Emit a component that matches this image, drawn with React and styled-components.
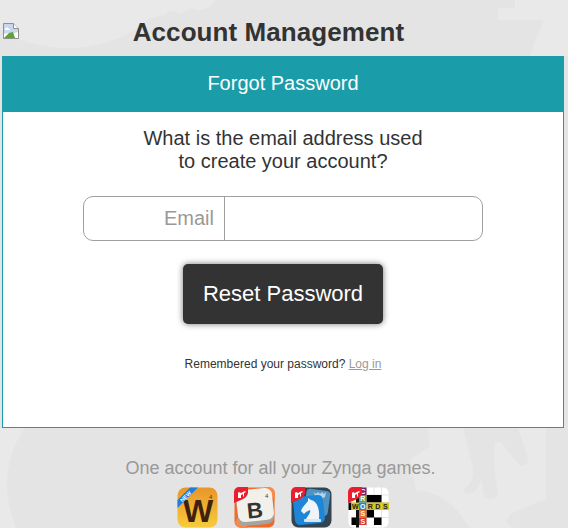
import React from "react";
import styled, { createGlobalStyle } from "styled-components";

const Global = createGlobalStyle`
  html, body { margin: 0; padding: 0; background: #e4e4e4; }
  body { font-family: "Liberation Sans", Arial, sans-serif; color: #333; }
  * { box-sizing: border-box; }
`;

const Page = styled.div`
  position: relative;
  width: 568px;
  height: 528px;
  overflow: hidden;
  padding: 0 4px 0 2px;
`;
const Backdrop = styled.svg`
  position: absolute;
  inset: 0;
  width: 568px;
  height: 528px;
`;
const Content = styled.div`
  position: relative;
  display: flex;
  flex-direction: column;
`;
const Masthead = styled.header`
  height: 56px;
  display: flex;
  align-items: flex-start;
  padding: 23px 0 0 1px;
`;
const BrokenImage = styled.svg`
  width: 16px;
  height: 16px;
  flex: none;
`;
const Title = styled.h1`
  flex: 1;
  margin: -6px 0 0;
  padding-right: 46px;
  text-align: center;
  font-size: 26px;
  letter-spacing: 0.08px;
  line-height: 30px;
  font-weight: 700;
  color: #333;
`;
const Panel = styled.main`
  height: 372px;
  background: #fff;
  border: 1px solid #1a9ca9;
  border-top: 0;
  display: flex;
  flex-direction: column;
  align-items: center;
`;
const PanelHeader = styled.div`
  align-self: stretch;
  height: 56px;
  margin: 0 -1px;
  background: #1a9ca9;
  color: #fff;
  font-size: 20px;
  line-height: 55px;
  text-align: center;
`;
const Prompt = styled.p`
  margin: 15px 0 0;
  font-size: 20px;
  line-height: 23px;
  text-align: center;
  color: #333;
`;
const Field = styled.label`
  display: flex;
  width: 400px;
  height: 45px;
  margin-top: 23px;
  border: 1px solid #a0a0a0;
  border-radius: 10px;
  overflow: hidden;
`;
const FieldLabel = styled.span`
  width: 141px;
  border-right: 1px solid #a0a0a0;
  padding-right: 10px;
  text-align: right;
  font-size: 20px;
  line-height: 42px;
  color: #999;
`;
const FieldInput = styled.input`
  flex: 1;
  min-width: 0;
  border: 0;
  outline: 0;
  background: transparent;
  font: 20px "Liberation Sans", Arial, sans-serif;
`;
const SubmitButton = styled.button`
  width: 200px;
  height: 60px;
  margin-top: 23px;
  border: 0;
  border-radius: 5px;
  background: #333;
  color: #fff;
  font: 22px "Liberation Sans", Arial, sans-serif;
  box-shadow: 0 0 6px rgba(0, 0, 0, 0.55);
`;
const Remember = styled.p`
  margin: 32px 0 0;
  font-size: 12px;
  line-height: 16px;
  color: #333;
`;
const LogIn = styled.a`
  color: #999;
  text-decoration: underline;
`;
const Footer = styled.footer`
  display: flex;
  flex-direction: column;
  align-items: center;
  padding-top: 30px;
`;
const Tagline = styled.p`
  margin: 0;
  padding-right: 5px;
  font-size: 18px;
  line-height: 21px;
  color: #999;
`;
const Games = styled.div`
  display: flex;
  gap: 16px;
  margin-top: 8px;
`;
const GameIcon = styled.svg`
  width: 41px;
  height: 41px;
  flex: none;
  display: block;
`;

const ZMark = () => (
  <g>
    <path d="M0 5a5 5 0 0 1 5-5h9v6q-1 5-7 7l-7 3z" fill="#e8202e" />
    <path d="M4 11V6l1-1 2 1 4-2 1 1-2 1v3l-1 1V7L7 8v3z" fill="#fff" />
  </g>
);

const WordsIcon = () => (
  <GameIcon viewBox="0 0 41 41">
    <defs>
      <linearGradient id="wg" x1="0" y1="0" x2="0" y2="1">
        <stop offset="0" stopColor="#e9952b" />
        <stop offset="1" stopColor="#f7cc3a" />
      </linearGradient>
    </defs>
    <rect x="0.5" y="0.5" width="40" height="40" rx="8" fill="url(#wg)" />
    <text x="21" y="35" textAnchor="middle" fontFamily="Liberation Sans" fontWeight="700" fontSize="32" fill="#40210d">W</text>
    <text x="32" y="12" fontFamily="Liberation Sans" fontSize="6" fill="#5a3a12">4</text>
    <path d="M0.5 13L13 0.5h8L0.5 21z" fill="#1c7fe0" />
    <text x="0" y="0" transform="translate(5.5 15.5) rotate(-45)" fontFamily="Liberation Sans" fontWeight="700" fontSize="5.5" fill="#fff">NEW</text>
  </GameIcon>
);

const BoggleIcon = () => (
  <GameIcon viewBox="0 0 41 41">
    <rect x="0.5" y="0.5" width="40" height="40" rx="6" fill="#ef6a2c" />
    <path d="M30 0l11 14V6a6 6 0 0 0-6-6zM4 30l10 11H7a6 6 0 0 1-6-6z" fill="#f58a4a" />
    <rect x="3" y="4" width="36" height="34" rx="7" transform="rotate(-6 21 21)" fill="#a5a5a0" />
    <rect x="3" y="2" width="36" height="32" rx="7" transform="rotate(-6 21 18)" fill="#f1f0ea" />
    <text x="21" y="31" textAnchor="middle" transform="rotate(-6 21 24)" fontFamily="Liberation Sans" fontWeight="700" fontSize="22" fill="#333">B</text>
    <text x="31" y="11" fontFamily="Liberation Sans" fontSize="6" fill="#444">4</text>
    <ZMark />
  </GameIcon>
);

const ChessIcon = () => (
  <GameIcon viewBox="0 0 41 41">
    <rect x="0.5" y="0.5" width="40" height="40" rx="7" fill="#33434f" />
    <rect x="14" y="3" width="24" height="25" rx="4" transform="rotate(8 27 16)" fill="#4d93c4" />
    <path d="M23 5l2 2 2-2 2 2 2-2 2 2 2-2-1 5-2 1 0 6h-6l0-6-2-1z" fill="#b8d3e6" />
    <rect x="3" y="9" width="30" height="28" rx="5" transform="rotate(-6 18 23)" fill="#1d86d6" />
    <path d="M15 32c2-4 5-6 4-9l-4 2-2 2-3-3c1-4 5-7 7-10l0-3 3 2c6 1 9 9 8 19z" fill="#eef4f8" />
    <rect x="13" y="32" width="17" height="3" rx="1" fill="#d7e6f0" />
    <ZMark />
  </GameIcon>
);

const Cell = styled.rect.attrs({ width: 7.5, height: 7.5 })`
  fill: ${({ $tone }) => $tone};
`;

const columnX = (c) => 3.5 + c * 7.5;
const rowY = (r) => 0.5 + r * 7.5;

const Crossword = [
  [1, 0, "#7a1f6b", "C", "#fff"],
  [1, 1, "#6f9e34", "R", "#fff"],
  [0, 2, "#d8c41f", "W", "#222"],
  [1, 2, "#2f7fd0", "O", "#fff"],
  [2, 2, "#d8c41f", "R", "#222"],
  [3, 2, "#d8c41f", "D", "#222"],
  [4, 2, "#d8c41f", "S", "#222"],
  [1, 3, "#e8702a", "S", "#fff"],
  [1, 4, "#d9352c", "S", "#fff"],
];

const CrossIcon = () => (
  <GameIcon viewBox="0 0 41 41">
    <rect x="0.5" y="0.5" width="40" height="40" rx="5" fill="#fff" />
    <path d="M3.5 8h37M3.5 15.5h37M3.5 30.5h37M11 0v40M18.5 0v40M26 0v40M33.5 0v40" stroke="#ccc" strokeWidth="0.5" />
    <rect x="0.5" y="15.5" width="3" height="7.5" fill="#000" />
    {[[2, 1], [3, 1], [2, 3], [0, 4], [3, 4]].map(([c, r]) => (
      <Cell key={c + "-" + r} x={columnX(c)} y={rowY(r)} $tone="#000" />
    ))}
    <rect x="8" y="0.5" width="3" height="40" fill="#111" />
    {Crossword.map(([c, r, tone, letter, ink]) => (
      <g key={c + "-" + r + letter}>
        <Cell x={columnX(c)} y={rowY(r)} $tone={tone} />
        <text x={columnX(c) + 3.75} y={rowY(r) + 6.2} textAnchor="middle" fontFamily="Liberation Sans" fontWeight="700" fontSize="7" fill={ink}>
          {letter}
        </text>
      </g>
    ))}
    <ZMark />
  </GameIcon>
);

export default function App() {
  return (
    <>
      <Global />
      <Page>
        <Backdrop viewBox="0 0 568 528">
          <g fill="#e9e9e9">
            <path d="M0 0H215c-6 10-14 12-24 8l-12 6c-6-4-10-4-14 1l-15 3c-20 18-45 28-75 30C45 49 20 42 0 30z" />
            <path d="M515 0H568V56H530c4-14 10-26 14-36H498V8h17z" />
            <path d="M428 428H546V528H470l-10-14c-10-14-26-22-44-24l-6-30 20-14z" />
            <path d="M0 428H25C12 445 6 470 7 490c1 14 5 26 9 38H0z" />
          </g>
          <g fill="#e4e4e4">
            <path d="M463 428h55l10 30c2 6-6 10-10 6l-17-22-6 0c-2 16 0 36 3 50 1 6-8 8-12 6-3-2-4-10-4-18-4 4-5 14-14 14-4 0-5-4-3-6 6-4 9-10 8-20z" />
            <path d="M568 496l-30 6-18 8-10 4-4 8 8 6H568z" />
          </g>
        </Backdrop>
        <Content>
          <Masthead>
            <BrokenImage viewBox="0 0 16 16">
              <path d="M.5.5h10l5 5v10H.5z" fill="#fff" stroke="#8f8f8f" />
              <path d="M1 1h9v5h5v3l-4 1-3 1-3-1-4 1z" fill="#c7d7ef" />
              <path d="M2 6c1-2 3-2 4 0h1v1H2z" fill="#fff" />
              <path d="M1 15l5-5 4-1 2 6z" fill="#5da52f" />
              <path d="M10.5.5v5h5" fill="#fff" stroke="#8f8f8f" />
            </BrokenImage>
            <Title>Account Management</Title>
          </Masthead>
          <Panel>
            <PanelHeader>Forgot Password</PanelHeader>
            <Prompt>
              What is the email address used
              <br />
              to create your account?
            </Prompt>
            <Field>
              <FieldLabel>Email</FieldLabel>
              <FieldInput type="email" />
            </Field>
            <SubmitButton type="button">Reset Password</SubmitButton>
            <Remember>
              Remembered your password? <LogIn href="#">Log in</LogIn>
            </Remember>
          </Panel>
          <Footer>
            <Tagline>One account for all your Zynga games.</Tagline>
            <Games>
              <WordsIcon />
              <BoggleIcon />
              <ChessIcon />
              <CrossIcon />
            </Games>
          </Footer>
        </Content>
      </Page>
    </>
  );
}
